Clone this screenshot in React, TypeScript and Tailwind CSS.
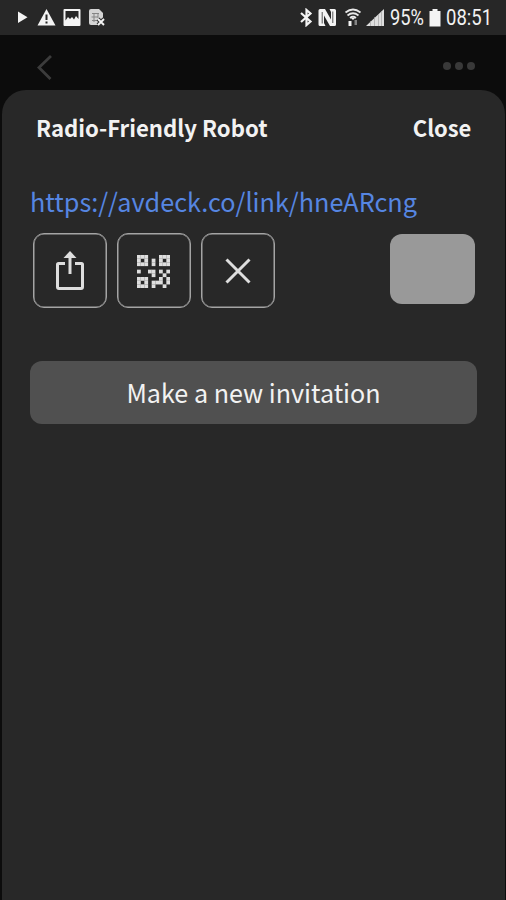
const qr = [
  "111000111",
  "101010101",
  "111010111",
  "000000000",
  "100110101",
  "000010010",
  "111000101",
  "101011101",
  "111010010",
];

function Qr() {
  return (
    <svg width="33" height="33" viewBox="0 0 9 9" fill="#dedede">
      {qr.flatMap((r, y) =>
        r.split("").map((c, x) => (c === "1" ? <rect key={`${x}-${y}`} x={x} y={y} width="1.03" height="1.03" /> : null)),
      )}
    </svg>
  );
}

function Share() {
  return (
    <svg width="30" height="40" viewBox="0 0 30 40" fill="none" stroke="#dedede" strokeWidth="3">
      <path d="M10 12.500H3.500Q2.500 12.500 2.500 13.500V36Q2.500 37.500 4 37.500H26Q27.500 37.500 27.500 36V13.500Q27.500 12.500 26.500 12.500H20" />
      <path d="M15 23V5" />
      <path d="M15 0L21.500 7H8.500Z" fill="#dedede" stroke="none" />
    </svg>
  );
}

function StatusLeft() {
  return (
    <svg width="88" height="19" viewBox="17 8 88 19" fill="#f4f4f4">
      <path d="M18 11.500L27.500 17.200L18 23Z" />
      <path fillRule="evenodd" d="M46.500 9L55.500 25.500H37.500ZM45.500 14.500V20H47.500V14.500ZM45.500 21.500V23.500H47.500V21.500Z" />
      <path fillRule="evenodd" d="M64.500 9H79.500Q80.500 9 80.500 10V25Q80.500 26 79.500 26H64.500Q63.500 26 63.500 25V10Q63.500 9 64.500 9ZM65.500 11V20.500L68 17L70 19L72 17L74 19.500L76 16L78.500 19V11Z" />
      <path d="M91 9H99L103 13V24Q102 25 101 25H91Q89 25 89 23V11Q89 9 91 9Z" fill="#d4d4d4" />
      <path d="M92 13.500H99M91.500 17H98M92 20.500H97M94 13V22M98 13V18" stroke="#858585" fill="none" />
      <path d="M98 19L104 25M104 19L98 25" stroke="#333" strokeWidth="4" />
      <path d="M98 19L104 25M104 19L98 25" stroke="#f4f4f4" strokeWidth="1.800" />
    </svg>
  );
}

function StatusRight() {
  return (
    <svg width="86" height="19" viewBox="299 8 86 19" fill="#f4f4f4">
      <path d="M301 13L310.500 21.500L306.500 25V10L310.500 13.500L301 22" fill="none" stroke="#f4f4f4" strokeWidth="2.200" />
      <path d="M320 9H325L331 19.500V12L329.500 9H334.500Q336 9 336 10.500V24.500Q336 26 334.500 26H330L324 15.500V23L325.500 26H320Q318.500 26 318.500 24.500V10.500Q318.500 9 320 9Z" />
      <path d="M322.200 12V23.500M332.800 11.500V23" stroke="#444" strokeWidth=".9" />
      <path d="M345.500 12.500Q353 6.500 360.500 12.500M347.500 15.500Q353 11 358.500 15.500M350 18Q353 15.500 356 18" fill="none" stroke="#e8e8e8" strokeWidth="1.700" />
      <path d="M351 18H355L353 20Z" />
      <path d="M348.500 21H351.500V26H348.500Z" />
      <path d="M354.500 20H357V25H354.500Z" fill="#858585" />
      <path d="M366 26L384 9V26Z" fill="#dedede" />
      <path d="M370.500 21V26M374.500 17V26M378.500 14V26M381.500 11V26" stroke="#a4a4a4" strokeWidth=".7" />
    </svg>
  );
}

const box =
  "flex h-[75px] w-[74px] items-center justify-center rounded-[11px] border border-[#a4a4a4] shadow-[inset_0_0_0_0.5px_#a4a4a4]";

export default function App() {
  return (
    <div className="flex h-[900px] w-[506px] flex-col overflow-hidden bg-[#0c0c0c] font-['Noto_Sans_CJK_SC',sans-serif] text-[#f2f2f2]">
      <header className="flex h-[35px] shrink-0 items-center bg-[#272727] pl-[17px] font-['Roboto',sans-serif] text-[22px]">
        <StatusLeft />
        <div className="ml-[194px] flex items-center">
          <StatusRight />
          <span className="ml-[5px] w-[39px] origin-left scale-x-[.83] pt-px leading-none">95%</span>
          <svg width="12" height="18" viewBox="0 0 12 18" fill="#f4f4f4">
            <path d="M3.500 0H8.500V2H11.500V17.500H.5V2H3.500Z" />
          </svg>
          <span className="ml-[5px] w-[54px] origin-left scale-x-[.84] pt-px leading-none">08:51</span>
        </div>
      </header>
      <nav className="flex h-[55px] shrink-0 justify-between pr-[31px] pl-[37px]">
        <svg width="16" height="26" viewBox="0 0 16 26" className="mt-[19px]" fill="none" stroke="#3c3c3c" strokeWidth="2.800">
          <path d="M14 2L2 13.500L13.500 25" />
        </svg>
        <div className="mt-[27px] flex gap-1">
          <i className="size-2 rounded-full bg-[#393939]" />
          <i className="size-2 rounded-full bg-[#393939]" />
          <i className="size-2 rounded-full bg-[#393939]" />
        </div>
      </nav>
      <main className="mr-px ml-0.5 flex flex-1 flex-col rounded-t-[24px] bg-[#282828] px-7">
        <div className="flex h-[76px] items-center justify-between px-[6px] pb-0.5 text-[23px] font-bold">
          <h1 className="origin-left scale-x-[.963]">Radio-Friendly Robot</h1>
          <button className="origin-right scale-x-[.955]">Close</button>
        </div>
        <a className="h-[67px] pt-[15px] text-[26px] text-[#5686e2]">
          <span className="inline-block origin-left scale-x-[.97]">https://avdeck.co/link/hneARcng</span>
        </a>
        <div className="flex items-start justify-between pr-0.5 pl-0.5">
          <div className="flex gap-[10.4px] pl-[.5px]">
            <div className={box}><Share /></div>
            <div className={`${box} pt-0.5`}><Qr /></div>
            <div className={box}>
              <svg width="26" height="26" viewBox="0 0 26 26" fill="none" stroke="#dedede" strokeWidth="3">
                <path d="M1.500 1.500L24.500 24.500M24.500 1.500L1.500 24.500" />
              </svg>
            </div>
          </div>
          <div className="mt-px h-[70px] w-[85px] rounded-xl bg-[#999]" />
        </div>
        <button className="mt-[53px] h-[63px] rounded-xl bg-[#505050] pb-[3px] text-[26px]">
          <span className="inline-block scale-x-[.966]">Make a new invitation</span>
        </button>
      </main>
    </div>
  );
}
